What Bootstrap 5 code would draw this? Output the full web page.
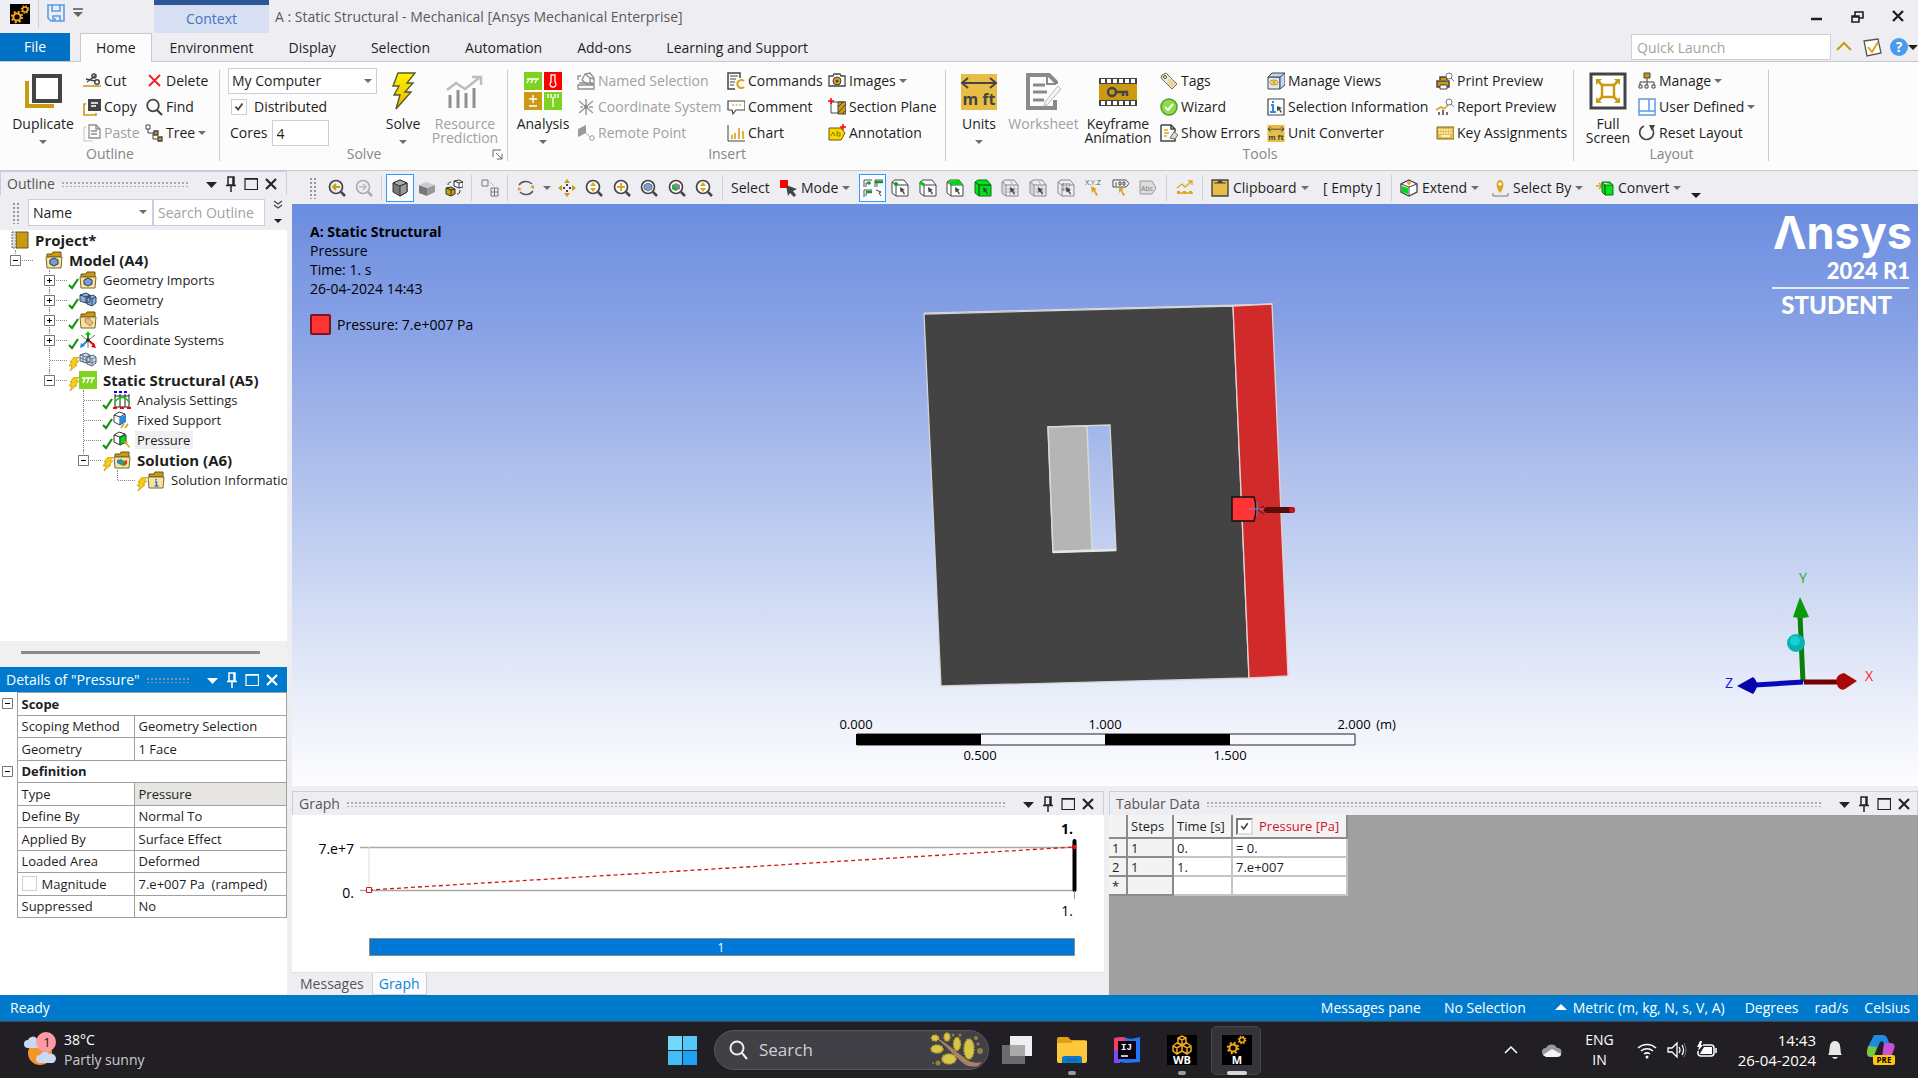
<!DOCTYPE html>
<html lang="en">
<head>
<meta charset="utf-8">
<meta name="viewport" content="width=device-width, initial-scale=1">
<title>A : Static Structural - Mechanical [Ansys Mechanical Enterprise]</title>
<link href="https://cdn.jsdelivr.net/npm/bootstrap@5.3.0/dist/css/bootstrap.min.css" rel="stylesheet">
<style>
:root{--chrome:#eeeef2;--line:#cccedb;--blue:#007acc;--gold:#c99a12;--ink:#1e1e1e}
body{font-family:"Open Sans","Noto Sans",sans-serif;font-size:14px;line-height:18px;color:var(--ink);background:var(--chrome);min-height:100vh;overflow:hidden}
svg{display:block;flex:none}
button,input,select{font:inherit;color:inherit}
.i18{width:18px;height:18px}
.plain{border:0;background:none;padding:0;border-radius:0;font-size:14px;line-height:18px;color:inherit;text-align:left;white-space:nowrap}
.plain:disabled{opacity:1;border:0;color:#a0a0a0}
.caret{width:0;height:0;border:4px solid transparent;border-top:4px solid #6d6d6d;border-bottom:0;flex:none}
.caret.ink{border-top-color:#1e1e1e;border-width:5px 5px 0}
/* title */
.titlebar{height:33px}
.quick{width:154px;padding-left:10px}
.quick-sep{width:1px;height:28px;background:var(--line)}
.context{width:115px;background:#d6e0f2;border-top:5px solid #2b5797;color:#4472c4}
.win-title{color:#5a5a5a;padding:4px 0 0 6px}
/* tabs */
.tabs{height:29px;border-bottom:1px solid #c8c8ce}
.tabs a{color:var(--ink);text-decoration:none;height:29px;display:flex;align-items:center;padding:0 17px 0 18px;white-space:nowrap}
.tabs a.file{background:#0072c6;color:#fff;width:70px;height:28px;padding:0;justify-content:center;margin-right:10px}
.tabs a.on{background:#fcfcfc;border:1px solid #c8c8ce;border-bottom:0;padding:0 15px}
.launch{width:200px;height:26px;border:1px solid var(--line);background:#fff;padding:0 5px}
.launch::placeholder,.finder::placeholder{color:#a2a2a2;opacity:1}
/* ribbon */
.ribbon{height:109px;background:#fcfcfc;border-bottom:1px solid #c8c8ce}
.group{position:relative;padding-top:6px;margin-bottom:9px}
.group::after{content:"";position:absolute;right:0;top:8px;bottom:0;width:1px;background:#ccc}
.group .caption{position:absolute;left:0;right:0;bottom:-2px;text-align:center;color:#868686}
.stack{display:flex;flex-direction:column}
.stack>*{height:26px;display:flex;align-items:center;gap:3px;white-space:nowrap}
.big{display:flex;flex-direction:column;align-items:center;text-align:center;height:78px;line-height:14px;padding-top:4px}
.big svg{width:38px;height:38px}
.big span.t{margin-top:7px}
.big .caret{margin-top:9px}
.target{width:149px;height:26px;border:1px solid var(--line);padding:0 3px;background:#fff;appearance:none}
.arrowed{position:relative}
.arrowed .caret{position:absolute;right:6px;top:11px}
.tick{appearance:none;width:16px;height:16px;border:1px solid var(--line);background:#fff;margin:0;flex:none}
.tick:checked{background:#fff url("data:image/svg+xml,%3Csvg xmlns='http://www.w3.org/2000/svg' viewBox='0 0 16 16'%3E%3Cpath d='M4 7.5 7 11l5-7' fill='none' stroke='%23444' stroke-width='2'/%3E%3C/svg%3E") center/100%}
.cores{width:57px;height:26px;border:1px solid var(--line);padding:0 4px}
/* graphics toolbar */
.gtools{height:33px;padding-left:17px}
.gtools .tb{width:28px;height:28px;display:flex;align-items:center;justify-content:center;border:1px solid transparent;flex:none;margin-right:-1px}
.gtools .tbset{display:flex;justify-content:space-between;flex:none}
.gtools .tbset .tb{margin-right:0;width:27px}
.gtools .tb.on{border-color:#3399ff;background:#fafcff}
.gtools .bar{width:1px;height:26px;background:var(--line);margin:0 4px;flex:none}
.grip{width:7px;height:22px;flex:none;background:radial-gradient(circle,#999 0 1px,transparent 1px) 0 0/4px 4px}
/* panels */
.side{width:287px;flex:none}
.panehead{height:24px;border:1px solid var(--line);border-bottom:0;color:#555;padding:0 8px 0 6px;flex:none}
.panehead .dots{height:6px;margin:0 10px 0 6px;flex:1;background:radial-gradient(circle,#9a9a9f 0 1px,transparent 1px) 0 0/4px 4px;opacity:.8}
.panehead svg{width:14px;height:16px;margin-left:6px}
.panehead.active{background:var(--blue);color:#fff;border:0;height:25px}
.finder,.filter{height:27px;border:1px solid var(--line);background:#fff;padding:0 4px;font-size:14px;border-radius:0;appearance:none}
.tree{background:#fff;height:411px;font-size:13px;overflow:hidden}
.trow{display:flex;align-items:center;height:20px;white-space:nowrap}
.trow.fw-bold{font-size:15px}
.trow .g,.trow .x{width:34px;height:20px;flex:none;position:relative}
.trow .x.v::before{content:"";position:absolute;left:15px;top:0;bottom:0;border-left:1px dotted #888}
.trow .up::before{content:"";position:absolute;left:15px;top:0;height:10px;border-left:1px dotted #888}
.trow .x::after{content:"";position:absolute;left:16px;right:1px;top:10px;border-top:1px dotted #888}
.trow .pm{position:absolute;left:10px;top:5px;width:11px;height:11px;z-index:1}
.trow .st{width:11px;height:14px;margin-top:7px}
.trow .i18{margin:0 6px 0 0}
.trow .i18.book{margin-left:11px}
.trow .sel{background:#f0f0f0;padding:0 3px 0 2px;margin-left:-2px}
.thumb{height:26px;padding:10px 27px 0 21px;background:#f0f0f0}
.thumb div{height:3px;background:#8a8a8a}
.props{width:100%;height:226px;border-collapse:collapse;font-size:13px;line-height:16px}
.props td,.props th{border:1px solid #a0a0a0;padding:0 0 0 4px;white-space:nowrap;font-weight:400}
.props th:first-child{border:0;padding:0 0 0 2px;width:17px}
.props .head td{font-weight:700}
.props .tick{width:15px;height:15px;margin-right:5px;vertical-align:-2px}
.pmbox{width:11px;height:11px}
/* scene */
.scene{position:relative;flex:1;min-height:0;background:linear-gradient(#6b8ddf,#86a0e5 20%,#a9bbeb 42%,#cdd8f3 66%,#e8edf9 84%,#fdfdff)}
.scene svg.model{position:absolute;inset:0;width:100%;height:100%}
.scene .note{position:absolute;left:18px;top:18px;font-size:14px;line-height:19px;color:#000}
.swatch{width:21px;height:21px;background:#ff3535;border:2px solid #7a1420;border-radius:2px}
.lowtab{padding:0 8px;height:22px;color:#555;text-decoration:none;display:flex;align-items:center}
.lowtab.on{background:#fbfbfd;color:#0e86d4;border:1px solid var(--line);border-top:0;padding:0 6px}
.grid{border-collapse:separate;border-spacing:0;font-size:13px;line-height:16px}
.grid td,.grid th{border-right:2px solid #c4c4c4;border-bottom:2px solid #c4c4c4;background:#fff;height:19px;padding:0 3px;font-weight:400;white-space:nowrap}
.grid th,.grid .k{background:#f3f3f3;border-right-color:#8c8c8c;border-bottom-color:#8c8c8c}
.grid thead th{height:24px;font-weight:500}
.grid .tick{width:17px;height:17px;border:2px solid #777;border-right-color:#ddd;border-bottom-color:#ddd;margin-right:6px}
.statusbar{height:26px;background:var(--blue);color:#fff;padding:0 8px 0 10px}
/* taskbar */
.taskbar{height:57px;background:#211f24;color:#fff;border-top:1px solid #46464a;display:grid;grid-template-columns:1fr auto 1fr}
.pill{width:275px;height:40px;border-radius:20px;background:#424047;border:1px solid #58565d;padding:0 4px 0 14px}
.pill input{background:none;border:0;width:100px;font-size:17px;color:#fff;outline:0}
.pill input::placeholder{color:#d0d0d4;opacity:1}
.app{width:55px;height:56px;position:relative;display:flex;align-items:center;justify-content:center}
.app.run::after{content:"";position:absolute;bottom:3px;width:8px;height:4px;border-radius:2px;background:#9b9a9e}
.app.run.cur::after{width:20px;background:#d7d7d9}
.app.cur::before{content:"";position:absolute;inset:4px 3px 3px 2px;border-radius:5px;background:#34333a;border:1px solid #47464d}
.app svg{position:relative;overflow:visible}
.tray{font-size:14px;line-height:20px}
.clock{font-size:15px}
</style>
</head>
<body class="d-flex flex-column">
<svg width="0" height="0" class="position-absolute" aria-hidden="true">
<defs>
<linearGradient id="bolt" x1="0" y1="0" x2="0" y2="1"><stop offset="0" stop-color="#fff200"/><stop offset="1" stop-color="#e8b800"/></linearGradient>
<g id="gearring" fill="none" stroke="#f5a81c"><circle r="3.6" stroke-width="2"/><circle r="5.2" stroke-width="2" stroke-dasharray="2 2.1"/></g>
<symbol id="gears" viewBox="0 0 20 20"><path fill="#000" d="M0 0h20v20H0z"/><use href="#gearring" x="7" y="13"/><use href="#gearring" transform="translate(15 5.5) scale(.7)"/></symbol>
<symbol id="save" viewBox="0 0 18 18"><path d="M1 1h16v16H4l-3-3zM5 1v6h8V1M6 17v-5h7v5M8 14v3" fill="none" stroke="#5b9be8" stroke-width="1.6"/></symbol>
<symbol id="dup" viewBox="0 0 38 38"><path d="M3 9v25h27" fill="none" stroke="#c99a12" stroke-width="4"/><path d="M10 4h26v25H10z" fill="#fff" stroke="#444" stroke-width="4"/></symbol>
<symbol id="cut" viewBox="0 0 18 18"><path d="M4 10 13 3M3 7l9 2" stroke="#444" stroke-width="1.3"/><g fill="none" stroke="#444" stroke-width="1.5"><circle cx="11" cy="4" r="2"/><circle cx="14" cy="10" r="2.3"/></g><path d="M0 14h18" stroke="#c99a12" stroke-width="1.5"/></symbol>
<symbol id="copy" viewBox="0 0 18 18"><path d="M3 6H1v11h12v-2" fill="none" stroke="#c99a12" stroke-width="1.6"/><path d="M5 1h13v12H5z" fill="#444"/><path d="M8 5h7M8 8h5" stroke="#fff" stroke-width="1.4"/></symbol>
<symbol id="paste" viewBox="0 0 18 18"><path d="M3 3H1v14h9" fill="none" stroke="#c4c4c4"/><path d="M6 1h7l4 4v9H6z M13 1v4h4M8 7h6M8 10h6" fill="none" stroke="#8e8e8e" stroke-width="1.3"/></symbol>
<symbol id="del" viewBox="0 0 18 18"><path d="m4 3 11 11M15 3 4 14" stroke="#f0202a" stroke-width="1.8"/></symbol>
<symbol id="find" viewBox="0 0 18 18"><circle cx="8" cy="7.500" r="5.800" fill="none" stroke="#444" stroke-width="1.800"/><path d="m12 12 5 5" stroke="#444" stroke-width="2.200"/></symbol>
<symbol id="treei" viewBox="0 0 18 18"><path d="M3 5v4h6M8 9v6h5" fill="none" stroke="#444"/><path d="M1 1h4v4H1z" fill="#fff" stroke="#444"/><path d="M9 7h4v4H9zM13 13h4v4h-4z" fill="#c99a12" stroke="#444" stroke-width="1.300"/></symbol>
<symbol id="solve" viewBox="0 0 38 38"><path d="M14 1h17l-8 10h6l-8 9h6L12 37l4-14h-6l5-9H9z" fill="url(#bolt)" stroke="#575a2a" stroke-width="1.400"/></symbol>
<symbol id="predict" viewBox="0 0 38 38"><path d="M4 36V23M12 36V18M20 36V21M28 36V16" stroke="#8f8f8f" stroke-width="3"/><path d="m1 18 9-7 9 6L33 6M26 5h9v8" fill="none" stroke="#bdbdbd" stroke-width="2.500"/></symbol>
<symbol id="analysis" viewBox="0 0 38 38"><path fill="#7ed321" d="M0 0h18v18H0zM20 20h18v18H20z"/><path fill="#f00" d="M20 0h18v18H20z"/><path fill="#c99a12" d="M0 20h18v18H0z"/><path d="M3 7h12M5 7l-2 4M9 7l-2 4M13 7l-2 4M9 23v8M5 27h8M5 34h8M24 22v4M27 22v4M29 25v10M31 22v4M34 22v4" stroke="#fff" stroke-width="1.400" fill="none"/><path d="M27 3h4v7a3 3 0 1 1-4 0z" fill="none" stroke="#fff" stroke-width="1.300"/></symbol>
<symbol id="named" viewBox="0 0 18 18"><path d="M5 8 8 2l5-1 4 5v6l-6 1zM8 2l5 4 4 1M13 6v5M1 8V4h3M2 11h14M1 13h16v4H1z" fill="none" stroke="#8e8e8e" stroke-width="1.300"/></symbol>
<symbol id="coord" viewBox="0 0 18 18"><path d="M9 9V1M9 9l7 6M9 9l-7 6M2 3l6 5M16 3l-6 5M3 9h3M12 9h4M9 11v6" stroke="#999" stroke-width="1.500"/><circle cx="9" cy="9" r="2" fill="#888"/></symbol>
<symbol id="remote" viewBox="0 0 18 18"><path d="M1 5 9 1v8l-8 4z" fill="#9a9a9a"/><path d="m9 9 4 4" stroke="#aaa"/><circle cx="15" cy="14" r="2.300" fill="none" stroke="#999"/></symbol>
<symbol id="cmds" viewBox="0 0 18 18"><path d="M13 6V1H1v16h7" fill="none" stroke="#444" stroke-width="1.500"/><path d="M3 4h8M3 7h6M3 10h5M3 13h4" stroke="#444"/><path d="M17 9a4 4 0 1 0 0 6" fill="none" stroke="#dba520" stroke-width="2.200"/></symbol>
<symbol id="comment" viewBox="0 0 18 18"><path d="M1 3h17v9H9l-3 4-1-4H1z" fill="#fff" stroke="#444" stroke-width="1.200"/><path d="M5 7h9" stroke="#c99a12" stroke-dasharray="2 1.500"/></symbol>
<symbol id="chart" viewBox="0 0 18 18"><path d="M1 1v16h17" fill="none" stroke="#444"/><path d="M5 15v-4M8 15V9M12 15V4M16 15V7" stroke="#dba520" stroke-width="1.700"/></symbol>
<symbol id="camera" viewBox="0 0 18 18"><path d="M1 4h4l1-2h6l1 2h4v10H1z" fill="#fff" stroke="#444" stroke-width="1.300"/><circle cx="9" cy="9" r="4" fill="#dba520" stroke="#444"/><circle cx="9" cy="9" r="1.500" fill="#444"/></symbol>
<symbol id="section" viewBox="0 0 18 18"><path d="M3 4h14v11H3z" fill="#fff" stroke="#444"/><path d="M10 4h8v12h-8z" fill="#c99a12" stroke="#444"/><path d="m10 9 5-5M10 15 18 6M14 16l4-4" stroke="#444"/><path d="M3 0v6M0 3h6" stroke="#f00" stroke-width="1.500"/></symbol>
<symbol id="annot" viewBox="0 0 18 18"><path d="M1 4h12l4 5-4 7H1z" fill="#f8d800" stroke="#6b5a00"/><path d="m3 12 2-4 2 4M9 7v5h3V9H9" fill="none" stroke="#8a7400"/><path d="M15 0v6M12 3h6" stroke="#f00" stroke-width="1.500"/></symbol>
<symbol id="units" viewBox="0 0 38 38"><path d="M1 2h36v36H1z" fill="#e8bd45"/><path d="M2 11h34M8 6l-6 5 6 5M30 6l6 5-6 5" fill="none" stroke="#444" stroke-width="2"/><text x="19" y="33" text-anchor="middle" font-size="16" font-weight="700" fill="#444">m ft</text></symbol>
<symbol id="sheet" viewBox="0 0 38 38"><path d="M31 12v-2l-7-7H3v33h27v-8" fill="none" stroke="#8a8a8a" stroke-width="4"/><path d="M22 3v9h9" fill="none" stroke="#8a8a8a" stroke-width="2"/><path d="M8 13h12M8 20h14M8 28h11" stroke="#8a8a8a" stroke-width="3"/><path d="m33 14 3 3-14 16-3 1 1-4z" fill="#f4f4f4" stroke="#bbb"/></symbol>
<symbol id="keyf" viewBox="0 0 38 38"><path d="M0 6h38v28H0z" fill="#444"/><path d="M0 12h38v16H0z" fill="#c99a12"/><path d="M2 9h36M2 31h36" stroke="#fff" stroke-width="4" stroke-dasharray="4 2"/><circle cx="13" cy="20" r="4" fill="none" stroke="#444" stroke-width="2.500"/><path d="M17 20h12M24 20v4M28 20v4" stroke="#444" stroke-width="2.500"/></symbol>
<symbol id="tag" viewBox="0 0 18 18"><path d="m2 3 4-2 11 11-5 5L1 6z" fill="#f6ecd2" stroke="#666"/><path d="m8 7 4 0 4 5-4 4-5-5z" fill="#ecd49a"/><circle cx="5" cy="5" r="1.500" fill="#fff" stroke="#444"/></symbol>
<symbol id="wiz" viewBox="0 0 18 18"><circle cx="9" cy="9" r="8" fill="#8edb4a" stroke="#5a9a36" stroke-width="1.500"/><path d="m5 9 3 3 5-6" fill="none" stroke="#fff" stroke-width="2"/></symbol>
<symbol id="errs" viewBox="0 0 18 18"><path d="M1 1h10l4 4v3M15 13v4H1V1M11 1v4h4" fill="none" stroke="#444" stroke-width="1.500"/><path d="M4 6h4M4 9h5M4 12h3" stroke="#dba520" stroke-width="1.500"/><path d="m10 14 4-6 4 3-3 4z" fill="#ddd" stroke="#666"/></symbol>
<symbol id="views" viewBox="0 0 18 18"><path d="M1 5h12v12H1z" fill="#dce8f8" stroke="#444"/><path d="m1 5 4-4h13l-5 4zM18 1v12l-5 4V5" fill="#c2d6f2" stroke="#444"/><ellipse cx="7" cy="10.500" rx="4" ry="2.500" fill="#f2d888" stroke="#c99a12"/><circle cx="7" cy="10.500" r="1" fill="#a87800"/></symbol>
<symbol id="selinfo" viewBox="0 0 18 18"><path d="M1 1h16v16H1z" fill="#fff" stroke="#444" stroke-width="1.200"/><path d="M6 3v2M4 7h2v7M3 14h6" stroke="#2f86e8" stroke-width="2" fill="none"/><path d="m10 8 5 2-2 1 2 3-1 1-2-3-2 1z" fill="#444"/></symbol>
<symbol id="print" viewBox="0 0 18 18"><path d="M4 8V5h7v3M1 9h12v6H1z" fill="#c99a12" stroke="#444" stroke-width="1.500"/><path d="M4 13h7v4H4z" fill="#fff" stroke="#444"/><circle cx="13" cy="4" r="3" fill="#fff" stroke="#777"/><path d="m15 6 3 3" stroke="#777"/></symbol>
<symbol id="report" viewBox="0 0 18 18"><path d="M3 17v-3M7 17v-5M11 17v-3" stroke="#444" stroke-width="1.500"/><path d="m0 12 5-3 3 2 4-4" fill="none" stroke="#dba520" stroke-width="1.600"/><circle cx="13" cy="4" r="3" fill="#fff" stroke="#777"/><path d="m15 6 3 3" stroke="#777"/></symbol>
<symbol id="keys" viewBox="0 0 18 18"><path d="M1 3h17v12H1z" fill="#e8bd45" stroke="#7d6620"/><path d="M3 6h13M3 9h13" stroke="#fff" stroke-width="1.500" stroke-dasharray="1.500 1"/><path d="M5 12h9" stroke="#fff" stroke-width="1.500"/></symbol>
<symbol id="full" viewBox="0 0 38 38"><path d="M2 2h34v34H2z" fill="#fff" stroke="#444" stroke-width="3"/><path d="M13 13h12v12H13zM13 13 8 8M25 13l5-5M13 25l-5 5M25 25l5 5" fill="none" stroke="#c99a12" stroke-width="2.500"/><path d="M7 7h6l-6 6zM31 7h-6l6 6zM7 31h6l-6-6zM31 31h-6l6-6z" fill="#c99a12"/></symbol>
<symbol id="manage" viewBox="0 0 18 18"><path d="M9 6v4M2 13v-3h14v3M9 10v3" fill="none" stroke="#444"/><path d="M6 1h6v5H6z" fill="#c99a12" stroke="#444"/><path d="M1 13h3v3H1zM7 13h3v3H7zM14 13h3v3h-3z" fill="#fff" stroke="#444"/></symbol>
<symbol id="userdef" viewBox="0 0 18 18"><path d="M1 1h16v16H1zM1 13h16M11 1v12" fill="#fff" stroke="#5b9be8" stroke-width="1.500"/></symbol>
<symbol id="reset" viewBox="0 0 18 18"><path d="M6 2a7 7 0 1 0 8 2" fill="none" stroke="#444" stroke-width="1.700"/><path d="M11 1h6l-3 6z" fill="#444"/></symbol>
<symbol id="zback" viewBox="0 0 18 18"><circle cx="8" cy="8" r="6.500" fill="none" stroke="#444" stroke-width="1.700"/><path d="m13 13 4 4" stroke="#444" stroke-width="2.500"/><path d="M12 8H5m3-3L5 8l3 3" fill="none" stroke="#c99a12" stroke-width="1.800"/></symbol>
<symbol id="zfwd" viewBox="0 0 18 18"><circle cx="8" cy="8" r="6.500" fill="none" stroke="#aaa" stroke-width="1.500"/><path d="m13 13 4 4" stroke="#aaa" stroke-width="2.500"/><path d="M4 8h7M8 5l3 3-3 3" fill="none" stroke="#bbb" stroke-width="1.500"/></symbol>
<symbol id="zud" viewBox="0 0 18 18"><circle cx="8" cy="8" r="6.500" fill="#fff" stroke="#444" stroke-width="1.700"/><path d="m13 13 4 4" stroke="#444" stroke-width="2.500"/><path d="m8 3 3 4H5zM8 13l3-4H5z" fill="#dba520"/></symbol>
<symbol id="zplus" viewBox="0 0 18 18"><circle cx="8" cy="8" r="6.500" fill="#fff" stroke="#444" stroke-width="1.700"/><path d="m13 13 4 4" stroke="#444" stroke-width="2.500"/><path d="M8 4v8M4 8h8" stroke="#dba520" stroke-width="2"/></symbol>
<symbol id="zblue" viewBox="0 0 18 18"><circle cx="8" cy="8" r="6.500" fill="#fff" stroke="#444" stroke-width="1.700"/><path d="m13 13 4 4" stroke="#444" stroke-width="2.500"/><path d="m8 4 4 2v4l-4 2-4-2V6z" fill="#7d9fcc" stroke="#456" stroke-width=".7"/></symbol>
<symbol id="zgreen" viewBox="0 0 18 18"><circle cx="8" cy="8" r="6.500" fill="#fff" stroke="#444" stroke-width="1.700"/><path d="m13 13 4 4" stroke="#444" stroke-width="2.500"/><path d="m8 4 4 2v4l-4 2-4-2V6z" fill="#888"/><path d="m4 6 4 2v4l-4-2z" fill="#0cc22a"/></symbol>
<symbol id="cubeiso" viewBox="0 0 18 18"><path d="m9 1 7 3v9l-7 4-7-4V4z" fill="#777" stroke="#333"/><path d="m2 4 7 3 7-3-7-3z" fill="#aaa" stroke="#333"/><path d="m9 7 7-3v9l-7 4z" fill="#999" stroke="#333"/></symbol>
<symbol id="cubeflat" viewBox="0 0 18 18"><path d="m1 6 8 3v8l-8-3z" fill="#777"/><path d="m9 9 8-3v7l-8 4z" fill="#999"/><path d="m1 6 7-3 9 3-8 3z" fill="#ccc"/></symbol>
<symbol id="cubes" viewBox="0 0 18 18"><path d="m9 2 5-1 4 2v5l-4 1-5-2zM9 2l5 2 4-1M14 4v5" fill="#fff" stroke="#333"/><path d="m1 9 5-1 4 2v5l-4 2-5-2z" fill="#c99a12" stroke="#333"/><path d="m1 9 5 2 4-1M6 11v5M3 6c0-2 1-3 3-3M15 11c0 3-1 4-3 4" fill="none" stroke="#333"/></symbol>
<symbol id="boxes" viewBox="0 0 18 18"><path d="M1 1h6v6H1zM10 9h7v8h-7zM10 13h7M13.500 9v8" fill="none" stroke="#777"/><path d="m9 3 4 4" stroke="#bbb"/></symbol>
<symbol id="rot" viewBox="0 0 18 18"><path d="M2 6a8 7 0 0 1 13-1M16 12a8 7 0 0 1-13 1" fill="none" stroke="#555" stroke-width="1.500"/><path d="M17 6v4l-4-2zM1 12V8l4 2z" fill="#dba520"/></symbol>
<symbol id="pan" viewBox="0 0 18 18"><path d="m9 0 3 4H6zM9 18l3-4H6zM0 9l4-3v6zM18 9l-4-3v6z" fill="#c99a12"/><path d="M9 5v2M9 11v2M5 9h2M11 9h2" stroke="#444" stroke-width="2"/></symbol>
<symbol id="modei" viewBox="0 0 18 18"><path d="M1 1h8v8H1z" fill="#f00"/><path d="m7 6 11 4-4 2 3 4-2 2-4-4-2 3z" fill="#444"/></symbol>
<symbol id="smart" viewBox="0 0 20 18"><path d="M1 8V1h8M12 8V1h8M1 18v-7h8M3 8V4h3M14 8V4M3 17v-3" fill="none" stroke="#555"/><circle cx="6" cy="4" r="1.800" fill="#0b9b28"/><path d="M12 3h8M3 13h6" stroke="#0b9b28" stroke-width="2.500"/><path d="m13 11 5 2-2 1 2 3" fill="none" stroke="#444"/></symbol>
<symbol id="cursor" viewBox="0 0 18 18"><path d="m9 8 5 3-2 .500 2 3-1 1-2-3-1.500 1z" fill="#444"/></symbol>
<symbol id="sv" viewBox="0 0 18 18"><path d="M5 6h12v11H5zM5 6 1 3v11l4 3M1 3l3-2h9l4 5" fill="#fff" stroke="#444"/><circle cx="5" cy="5" r="2" fill="#0c9b28"/><use href="#cursor"/></symbol>
<symbol id="se" viewBox="0 0 18 18"><path d="M5 6h12v11H5zM5 6 1 3v11l4 3M1 3l3-2h9l4 5" fill="#fff" stroke="#444"/><path d="m1 3 4 3" stroke="#0c0" stroke-width="3"/><use href="#cursor"/></symbol>
<symbol id="sf" viewBox="0 0 18 18"><path d="M5 6h12v11H5zM5 6 1 3v11l4 3M1 3l3-2h9l4 5" fill="#fff" stroke="#444"/><path d="m1 2 12-1 4 5H5z" fill="#00d818"/><use href="#cursor"/></symbol>
<symbol id="sb" viewBox="0 0 18 18"><path d="M5 6h12v11H5zM5 6 1 3v11l4 3zM1 3l3-2h9l4 5H5z" fill="#00e41a" stroke="#126b1c"/><use href="#cursor"/></symbol>
<symbol id="sm" viewBox="0 0 18 18"><path d="M5 6h12v11H5zM5 6 1 3v11l4 3M1 3l3-2h9l4 5" fill="none" stroke="#888"/><path d="M9 6v11M13 6v11M5 10h12M5 13h12M3 2v13M9 1l3 5" fill="none" stroke="#b4b4b4"/><use href="#cursor"/></symbol>
<symbol id="smm" viewBox="0 0 18 18"><path d="M5 6h12v11H5zM5 6 1 3v11l4 3M1 3l3-2h9l4 5" fill="none" stroke="#888"/><path d="M5 4h8v8H5z" fill="#999"/><path d="M8 4v8M11 4v8M5 8h8" stroke="#eee"/><use href="#cursor"/></symbol>
<symbol id="xyz" viewBox="0 0 18 18"><text x="9" y="6" text-anchor="middle" font-size="7" fill="#555">X.Y.Z</text><path d="m7 7 6 3-2 1 3 5-2 1-2-5-2 2z" fill="#dba520"/></symbol>
<symbol id="lbl" viewBox="0 0 18 18"><path d="M1 1h13l3 3.500L14 8H1z" fill="#fff" stroke="#444"/><path d="M4 3v4M7 3h2v3H7zM11 3h2v3h-2z" stroke="#444" fill="none"/><path d="m7 8 5 2-2 1 3 5-2 1-2-5-2 2z" fill="#dba520"/></symbol>
<symbol id="abct" viewBox="0 0 18 18"><path d="M1 2h12l4 7-4 6H1z" fill="#ddd" stroke="#999"/><text x="8" y="12" text-anchor="middle" font-size="7" fill="#777">Abc</text></symbol>
<symbol id="trend" viewBox="0 0 18 18"><path d="m1 9 5-4 3 3 7-6M12 2h4v4M1 14h16" fill="none" stroke="#dba520" stroke-width="1.300"/><path d="M1 12h3v3H1zM7 12h3v3H7zM13 12h3v3h-3z" fill="#dba520"/></symbol>
<symbol id="clip" viewBox="0 0 18 18"><path d="M1 1h16v16H1z" fill="#e8bd45" stroke="#444" stroke-width="1.400"/><path d="M3 4h12M6 4l3-3 3 3" stroke="#444" fill="#444"/></symbol>
<symbol id="ext" viewBox="0 0 18 18"><path d="m9 1 8 4v8l-8 4-8-4V5z" fill="#fff" stroke="#444" stroke-width="1.300"/><path d="m2 7 6 2v6l-6-2z" fill="#00d81a"/><path d="M9 8v9M9 8l8-3M9 8 1 5" stroke="#444"/><path d="M9 2v4M7 4h4" stroke="#dba520" stroke-width="1.500"/></symbol>
<symbol id="pinpt" viewBox="0 0 18 18"><path d="M9 14C4 8 5 1 9 1s5 7 0 13z" fill="#dba520"/><circle cx="9" cy="5" r="1.700" fill="#fff"/><path d="M2 14v3h15v-3" fill="none" stroke="#777"/></symbol>
<symbol id="conv" viewBox="0 0 18 18"><path d="M0 7h5M3 4l3 3-3 3" stroke="#dba520" fill="none" stroke-width="1.500"/><path d="M9 6h8v10H9zM9 6 6 3v10l3 3zM6 3h8l3 3" fill="#00e41a" stroke="#126b1c"/></symbol>
<symbol id="pmm" viewBox="0 0 11 11"><path d="M.5.500h10v10H.5z" fill="#fff" stroke="#777"/><path d="M3 5.500h5" stroke="#000"/></symbol>
<symbol id="pmp" viewBox="0 0 11 11"><path d="M.5.500h10v10H.5z" fill="#fff" stroke="#777"/><path d="M3 5.500h5M5.500 3v5" stroke="#000"/></symbol>
<symbol id="ok" viewBox="0 0 11 14"><path d="m1 8 3 3 6-9" fill="none" stroke="#10930f" stroke-width="2.200"/></symbol>
<symbol id="zap" viewBox="0 0 11 14"><path d="M6 0h5L8 4h3L7 8h2l-7 6 2-5H1l3-4H2z" fill="#f8cc10" stroke="#b98c00" stroke-width=".6"/></symbol>
<symbol id="book" viewBox="0 0 18 18"><path d="M5 1h12v16H5z" fill="#c99a12" stroke="#6b5512"/><path d="M1 1h4v16H1z" fill="#ddd" stroke="#666" stroke-dasharray="2 1"/></symbol>
<symbol id="folder" viewBox="0 0 18 18"><path d="M2 3h5l1-2h8v5H2z" fill="#c99a12" stroke="#6b5512"/><path d="M1 6h16l-1 11H2z" fill="#f6e3a0" stroke="#7a6a30"/></symbol>
<symbol id="fcube" viewBox="0 0 18 18"><use href="#folder"/><path d="m9 7 4 2v4l-4 2-4-2V9z" fill="#6f9fd8" stroke="#334"/></symbol>
<symbol id="fmat" viewBox="0 0 18 18"><use href="#folder"/><path d="m6 8 4-1 4 5-3 3-5-4z" fill="#efb888" stroke="#a86"/></symbol>
<symbol id="fsol" viewBox="0 0 18 18"><use href="#folder"/><path d="m4 9 4-1v6l-4-2z" fill="#2f80e0"/><path d="m8 8 3 2v5l-3-1z" fill="#1db832"/><path d="m11 10 3-1v4l-3 2z" fill="#e23a2a"/></symbol>
<symbol id="finfo" viewBox="0 0 18 18"><use href="#folder"/><path d="M9 8v1.500M8 11h1.500v4M7.500 15h4" stroke="#2f70d0" stroke-width="1.500" fill="none"/></symbol>
<symbol id="geo" viewBox="0 0 18 18"><path d="m1 4 6-2 4 2v7l-4 1-6-2zM8 6l6-2 3 2v6l-4 3-5-2z" fill="#86aee0" stroke="#345"/><path d="m1 4 6 2 4-2M7 6v6M8 6l5 2 4-2M13 8v6" stroke="#345" fill="none"/></symbol>
<symbol id="mesh" viewBox="0 0 18 18"><path d="m1 4 6-2 4 2v7l-4 1-6-2zM8 6l6-2 3 2v6l-4 3-5-2z" fill="#cbdaf0" stroke="#567"/><path d="m1 4 6 2 4-2M7 6v6M8 6l5 2 4-2M13 8v6M1 7l6 2M4 3v8M8 10l5 2 4-2" stroke="#567" fill="none" stroke-width=".8"/></symbol>
<symbol id="csys" viewBox="0 0 18 18"><path d="M9 9V3" stroke="#0a0" stroke-width="2"/><path d="m9 0 3 4H6z" fill="#0c0"/><path d="m9 9 6 5" stroke="#e00" stroke-width="2"/><path d="m17 17-5-1 3-4z" fill="#e00"/><path d="m9 9-5 5" stroke="#28d" stroke-width="2"/><path d="m1 17 1-5 4 3z" fill="#28d"/><path d="m2 4 5 4M16 4l-5 4M9 11v6" stroke="#777"/><circle cx="9" cy="9" r="2" fill="#333"/></symbol>
<symbol id="stat" viewBox="0 0 18 18"><path d="M0 0h18v18H0z" fill="#7ed321"/><path d="M3 7h13M6 7l-2 5M10 7l-2 5M14 7l-2 5" stroke="#fff" stroke-width="1.500"/></symbol>
<symbol id="aset" viewBox="0 0 18 18"><path d="M2 3v13M7 3v13M12 3v13M16 3v13M2 5h14M2 16h14" stroke="#222"/><path d="M2 11c4-6 10-6 14 0" fill="none" stroke="#0c0" stroke-width="1.600"/><path d="M1 1h3M6 1h3M11 1h3" stroke="#00f" stroke-width="2"/><path d="M0 17h4M7 17h4M14 17h4" stroke="#f00" stroke-width="2"/></symbol>
<symbol id="fix" viewBox="0 0 18 18"><path d="m1 4 5-3 6 2v8l-5 3-6-3zM1 4l6 2 5-3M7 6v8" fill="#fff" stroke="#345"/><path d="m7 6 6-2v7l-6 3z" fill="#2f86e0"/><path d="m8 17 3-4M12 17l3-4" stroke="#c99a12" stroke-width="1.500"/></symbol>
<symbol id="pres" viewBox="0 0 18 18"><path d="m1 4 5-3 6 2v8l-5 3-6-3zM1 4l6 2 5-3M7 6v8" fill="#fff" stroke="#333"/><path d="m7 6 6-2v7l-6 3z" fill="#0ed42a" stroke="#252"/><path d="m11 10 4 1-1 1 3 4-1 1-3-4-1 1z" fill="#dba520"/></symbol>
<symbol id="pin" viewBox="0 0 14 16"><path d="M4 1h6v8H4zM2 9.500h10M7 10v6M9 1v8" fill="none" stroke="currentColor" stroke-width="1.500"/></symbol>
<symbol id="maxi" viewBox="0 0 14 16"><path d="M1 2.500h12.500v11H1z" fill="none" stroke="currentColor" stroke-width="1.200"/><path d="M1 3h12.500" stroke="currentColor" stroke-width="1.500"/></symbol>
<symbol id="cls" viewBox="0 0 14 16"><path d="m2 3 10 10M12 3 2 13" stroke="currentColor" stroke-width="2.200"/></symbol>
<symbol id="cdn" viewBox="0 0 14 16"><path d="M2 6h11l-5.500 6z" fill="currentColor"/></symbol>
</defs>
</svg>

<header>
 <div class="titlebar d-flex align-items-start">
  <div class="quick d-flex align-items-start">
   <svg width="20" height="20" class="mt-1"><use href="#gears"/></svg>
   <div class="quick-sep ms-2 me-2"></div>
   <button class="btn plain mt-1" aria-label="Save"><svg class="i18"><use href="#save"/></svg></button>
   <button class="btn plain d-flex flex-column align-items-center gap-1 ms-2 pt-2" aria-label="Customize toolbar"><svg width="10" height="9"><path d="M0 1h10" stroke="#555" stroke-width="1.500"/><path d="M0 4h10L5 9z" fill="#666"/></svg></button>
  </div>
  <div class="context h-100 d-flex align-items-center justify-content-center">Context</div>
  <div class="win-title flex-grow-1">
   <div class="pt-1">A : Static Structural - Mechanical [Ansys Mechanical Enterprise]</div></div>
  <div class="d-flex align-items-center gap-4 pt-2" style="padding-right:13px">
   <button class="btn plain" aria-label="Minimize"><svg width="18" height="18"><path d="M4 11h11" stroke="#1e1e1e" stroke-width="2.500"/></svg></button>
   <button class="btn plain" aria-label="Restore"><svg width="18" height="18"><path d="M3 8h7v6H3zM3 9h7M6 8V4h8v6h-4" fill="none" stroke="#1e1e1e" stroke-width="1.600"/></svg></button>
   <button class="btn plain" aria-label="Close"><svg width="14" height="18"><path d="m2 3 10 10M12 3 2 13" stroke="#1e1e1e" stroke-width="2.300"/></svg></button>
  </div>
 </div>
 <nav class="tabs d-flex">
  <a class="file" href="#">File</a><a class="on" href="#">Home</a><a href="#">Environment</a><a href="#">Display</a><a href="#">Selection</a><a href="#">Automation</a><a href="#">Add-ons</a><a href="#">Learning and Support</a>
  <div class="ms-auto d-flex align-items-center" style="gap:3px">
   <input class="launch" placeholder="Quick Launch" aria-label="Quick Launch">
   <svg width="20" height="18"><path d="m3 12 7-7 7 7" fill="none" stroke="#c99a12" stroke-width="2"/></svg>
   <svg width="30" height="22"><path d="m7 5 14-2 3 14-14 3z" fill="#fff" stroke="#555" stroke-width="1.300"/><path d="m11 11 4 5 6-10" fill="none" stroke="#dba520" stroke-width="2"/></svg>
   <svg width="19" height="19"><circle cx="9" cy="9" r="9" fill="#4a9af0"/><text x="9" y="14" text-anchor="middle" font-size="14" font-weight="700" fill="#fff">?</text></svg><span class="caret ink" style="margin-left:-4px"></span>
  </div>
 </nav>
 <div class="ribbon d-flex">
  <section class="group d-flex" style="width:220px;padding-left:8px">
   <button class="btn plain big" style="width:70px"><svg><use href="#dup"/></svg><span class="t">Duplicate</span><span class="caret"></span></button>
   <div class="stack" style="width:67px;padding-left:5px">
    <button class="btn plain"><svg class="i18"><use href="#cut"/></svg>Cut</button>
    <button class="btn plain"><svg class="i18"><use href="#copy"/></svg>Copy</button>
    <button class="btn plain" disabled><svg class="i18"><use href="#paste"/></svg>Paste</button>
   </div>
   <div class="stack">
    <button class="btn plain"><svg class="i18"><use href="#del"/></svg>Delete</button>
    <button class="btn plain"><svg class="i18"><use href="#find"/></svg>Find</button>
    <button class="btn plain"><svg class="i18"><use href="#treei"/></svg>Tree <span class="caret"></span></button>
   </div>
   <div class="caption">Outline</div>
  </section>
  <section class="group d-flex" style="width:288px;padding-left:8px">
   <div class="stack" style="width:150px">
    <div class="arrowed"><select class="target" aria-label="Solve target"><option>My Computer</option></select><span class="caret"></span></div>
    <label style="padding-left:3px;gap:7px"><input class="tick" type="checkbox" checked>Distributed</label>
    <label style="padding-left:2px;gap:4px">Cores <input class="cores" value="4"></label>
   </div>
   <button class="btn plain big" style="width:50px"><svg><use href="#solve"/></svg><span class="t">Solve</span><span class="caret"></span></button>
   <button class="btn plain big" style="width:74px" disabled><svg><use href="#predict"/></svg><span class="t">Resource<br>Prediction</span></button>
   <div class="caption">Solve</div>
   <svg width="12" height="12" class="position-absolute" style="right:4px;bottom:0"><path d="M1 8V1h8M4 4l6 6M10 5v5H5" fill="none" stroke="#666"/></svg>
  </section>
  <section class="group d-flex" style="width:438px;padding-left:5px">
   <button class="btn plain big" style="width:60px"><svg><use href="#analysis"/></svg><span class="t">Analysis</span><span class="caret"></span></button>
   <div class="stack" style="width:154px;padding-left:4px">
    <button class="btn plain" disabled><svg class="i18"><use href="#named"/></svg>Named Selection</button>
    <button class="btn plain" disabled><svg class="i18"><use href="#coord"/></svg>Coordinate System</button>
    <button class="btn plain" disabled><svg class="i18"><use href="#remote"/></svg>Remote Point</button>
   </div>
   <div class="stack" style="width:101px">
    <button class="btn plain"><svg class="i18"><use href="#cmds"/></svg>Commands</button>
    <button class="btn plain"><svg class="i18"><use href="#comment"/></svg>Comment</button>
    <button class="btn plain"><svg class="i18"><use href="#chart"/></svg>Chart</button>
   </div>
   <div class="stack">
    <button class="btn plain"><svg class="i18"><use href="#camera"/></svg>Images<span class="caret"></span></button>
    <button class="btn plain"><svg class="i18"><use href="#section"/></svg>Section Plane</button>
    <button class="btn plain"><svg class="i18"><use href="#annot"/></svg>Annotation</button>
   </div>
   <div class="caption">Insert</div>
  </section>
  <section class="group d-flex" style="width:628px;padding-left:5px">
   <button class="btn plain big" style="width:56px"><svg><use href="#units"/></svg><span class="t">Units</span><span class="caret"></span></button>
   <button class="btn plain big" style="width:73px" disabled><svg><use href="#sheet"/></svg><span class="t">Worksheet</span></button>
   <button class="btn plain big" style="width:76px"><svg><use href="#keyf"/></svg><span class="t">Keyframe<br>Animation</span></button>
   <div class="stack" style="width:111px;padding-left:4px">
    <button class="btn plain"><svg class="i18"><use href="#tag"/></svg>Tags</button>
    <button class="btn plain"><svg class="i18"><use href="#wiz"/></svg>Wizard</button>
    <button class="btn plain"><svg class="i18"><use href="#errs"/></svg>Show Errors</button>
   </div>
   <div class="stack" style="width:169px">
    <button class="btn plain"><svg class="i18"><use href="#views"/></svg>Manage Views</button>
    <button class="btn plain"><svg class="i18"><use href="#selinfo"/></svg>Selection Information</button>
    <button class="btn plain"><svg class="i18"><use href="#units"/></svg>Unit Converter</button>
   </div>
   <div class="stack">
    <button class="btn plain"><svg class="i18"><use href="#print"/></svg>Print Preview</button>
    <button class="btn plain"><svg class="i18"><use href="#report"/></svg>Report Preview</button>
    <button class="btn plain"><svg class="i18"><use href="#keys"/></svg>Key Assignments</button>
   </div>
   <div class="caption">Tools</div>
  </section>
  <section class="group d-flex" style="width:195px;padding-left:8px">
   <button class="btn plain big" style="width:52px"><svg><use href="#full"/></svg><span class="t">Full<br>Screen</span></button>
   <div class="stack" style="padding-left:4px">
    <button class="btn plain"><svg class="i18"><use href="#manage"/></svg>Manage<span class="caret"></span></button>
    <button class="btn plain"><svg class="i18"><use href="#userdef"/></svg>User Defined<span class="caret"></span></button>
    <button class="btn plain"><svg class="i18"><use href="#reset"/></svg>Reset Layout</button>
   </div>
   <div class="caption">Layout</div>
  </section>
 </div>
</header>

<main class="d-flex flex-grow-1" style="gap:5px;min-height:0">
 <aside class="side d-flex flex-column">
  <div class="panehead d-flex align-items-center">Outline<span class="dots"></span><svg class="text-dark"><use href="#cdn"/></svg><svg class="text-dark"><use href="#pin"/></svg><svg class="text-dark"><use href="#maxi"/></svg><svg class="text-dark"><use href="#cls"/></svg></div>
  <div class="d-flex align-items-center" style="height:35px;padding:0 3px 0 12px">
   <span class="grip" style="margin-right:9px"></span>
   <div class="arrowed d-flex"><select class="filter" style="width:125px" aria-label="Filter by"><option>Name</option></select><span class="caret"></span></div>
   <input class="finder" style="width:112px" placeholder="Search Outline" aria-label="Search Outline">
   <svg width="18" height="28" class="ms-1"><path d="m5 2 4 3 4-3M5 6l4 3 4-3" fill="none" stroke="#444" stroke-width="1.300"/><path d="M5 20h8l-4 4z" fill="#1e1e1e"/></svg>
  </div>
  <div class="tree">
   <div class="trow fw-bold"><svg class="i18 book"><use href="#book"/></svg>Project*</div>
   <div class="trow fw-bold"><span class="x up"><svg class="pm"><use href="#pmm"/></svg></span><span class="st"></span><svg class="i18"><use href="#fcube"/></svg>Model (A4)</div>
   <div class="trow"><span class="g"></span><span class="x v"><svg class="pm"><use href="#pmp"/></svg></span><svg class="st"><use href="#ok"/></svg><svg class="i18"><use href="#fcube"/></svg>Geometry Imports</div>
   <div class="trow"><span class="g"></span><span class="x v"><svg class="pm"><use href="#pmp"/></svg></span><svg class="st"><use href="#ok"/></svg><svg class="i18"><use href="#geo"/></svg>Geometry</div>
   <div class="trow"><span class="g"></span><span class="x v"><svg class="pm"><use href="#pmp"/></svg></span><svg class="st"><use href="#ok"/></svg><svg class="i18"><use href="#fmat"/></svg>Materials</div>
   <div class="trow"><span class="g"></span><span class="x v"><svg class="pm"><use href="#pmp"/></svg></span><svg class="st"><use href="#ok"/></svg><svg class="i18"><use href="#csys"/></svg>Coordinate Systems</div>
   <div class="trow"><span class="g"></span><span class="x v"></span><svg class="st"><use href="#zap"/></svg><svg class="i18"><use href="#mesh"/></svg>Mesh</div>
   <div class="trow fw-bold"><span class="g"></span><span class="x up"><svg class="pm"><use href="#pmm"/></svg></span><svg class="st"><use href="#zap"/></svg><svg class="i18"><use href="#stat"/></svg>Static Structural (A5)</div>
   <div class="trow"><span class="g"></span><span class="g"></span><span class="x v"></span><svg class="st"><use href="#ok"/></svg><svg class="i18"><use href="#aset"/></svg>Analysis Settings</div>
   <div class="trow"><span class="g"></span><span class="g"></span><span class="x v"></span><svg class="st"><use href="#ok"/></svg><svg class="i18"><use href="#fix"/></svg>Fixed Support</div>
   <div class="trow"><span class="g"></span><span class="g"></span><span class="x v"></span><svg class="st"><use href="#ok"/></svg><svg class="i18"><use href="#pres"/></svg><span class="sel">Pressure</span></div>
   <div class="trow fw-bold"><span class="g"></span><span class="g"></span><span class="x up"><svg class="pm"><use href="#pmm"/></svg></span><svg class="st"><use href="#zap"/></svg><svg class="i18"><use href="#fsol"/></svg>Solution (A6)</div>
   <div class="trow"><span class="g"></span><span class="g"></span><span class="g"></span><span class="x up"></span><svg class="st"><use href="#zap"/></svg><svg class="i18"><use href="#finfo"/></svg>Solution Information</div>
  </div>
  <div class="thumb"><div></div></div>
  <div class="panehead active d-flex align-items-center">Details of "Pressure"<span class="dots"></span><svg><use href="#cdn"/></svg><svg><use href="#pin"/></svg><svg><use href="#maxi"/></svg><svg><use href="#cls"/></svg></div>
  <div class="bg-white flex-grow-1">
   <table class="props">
    <tr class="head"><th><svg class="pmbox"><use href="#pmm"/></svg></th><td colspan="2">Scope</td></tr>
    <tr><th></th><td style="width:117px">Scoping Method</td><td>Geometry Selection</td></tr>
    <tr><th></th><td>Geometry</td><td>1 Face</td></tr>
    <tr class="head"><th><svg class="pmbox"><use href="#pmm"/></svg></th><td colspan="2">Definition</td></tr>
    <tr><th></th><td>Type</td><td style="background:#e6e5e1">Pressure</td></tr>
    <tr><th></th><td>Define By</td><td>Normal To</td></tr>
    <tr><th></th><td>Applied By</td><td>Surface Effect</td></tr>
    <tr><th></th><td>Loaded Area</td><td>Deformed</td></tr>
    <tr><th></th><td><label><input type="checkbox" class="tick">Magnitude</label></td><td>7.e+007 Pa &nbsp;(ramped)</td></tr>
    <tr><th></th><td>Suppressed</td><td>No</td></tr>
   </table>
  </div>
 </aside>

 <div class="d-flex flex-column flex-grow-1" style="min-width:0">
  <div class="gtools d-flex align-items-center">
   <span class="grip" style="margin-right:7px"></span>
   <button class="btn plain tb" aria-label="Previous view"><svg class="i18"><use href="#zback"/></svg></button>
   <button class="btn plain tb" aria-label="Next view"><svg class="i18"><use href="#zfwd"/></svg></button><span class="bar"></span>
   <button class="btn plain tb on" aria-label="Shaded with edges"><svg class="i18"><use href="#cubeiso"/></svg></button>
   <button class="btn plain tb" aria-label="Shaded"><svg class="i18"><use href="#cubeflat"/></svg></button>
   <button class="btn plain tb" aria-label="Show parts"><svg class="i18"><use href="#cubes"/></svg></button><span class="bar"></span>
   <button class="btn plain tb" aria-label="Viewports"><svg class="i18"><use href="#boxes"/></svg></button><span class="bar"></span>
   <button class="btn plain tb" aria-label="Rotate"><svg class="i18"><use href="#rot"/></svg></button><span class="caret" style="margin:0 2px 0 4px"></span>
   <div class="tbset" style="width:165px">
   <button class="btn plain tb" aria-label="Pan"><svg class="i18"><use href="#pan"/></svg></button>
   <button class="btn plain tb" aria-label="Zoom"><svg class="i18"><use href="#zud"/></svg></button>
   <button class="btn plain tb" aria-label="Box zoom"><svg class="i18"><use href="#zplus"/></svg></button>
   <button class="btn plain tb" aria-label="Zoom to fit"><svg class="i18"><use href="#zblue"/></svg></button>
   <button class="btn plain tb" aria-label="Zoom to selection"><svg class="i18"><use href="#zgreen"/></svg></button>
   <button class="btn plain tb" aria-label="Magnifier"><svg class="i18"><use href="#zud"/></svg></button></div><span class="bar"></span>
   <span class="ms-1" style="width:48px">Select</span>
   <button class="btn plain d-flex align-items-center" style="width:80px;gap:4px"><svg class="i18"><use href="#modei"/></svg>Mode<span class="caret"></span></button>
   <div class="tbset" style="width:303px">
   <button class="btn plain tb on" aria-label="Smart select"><svg width="20" height="18"><use href="#smart"/></svg></button>
   <button class="btn plain tb" aria-label="Vertex"><svg class="i18"><use href="#sv"/></svg></button>
   <button class="btn plain tb" aria-label="Edge"><svg class="i18"><use href="#se"/></svg></button>
   <button class="btn plain tb" aria-label="Face"><svg class="i18"><use href="#sf"/></svg></button>
   <button class="btn plain tb" aria-label="Body"><svg class="i18"><use href="#sb"/></svg></button>
   <button class="btn plain tb" aria-label="Node"><svg class="i18"><use href="#sm"/></svg></button>
   <button class="btn plain tb" aria-label="Element face"><svg class="i18"><use href="#sm"/></svg></button>
   <button class="btn plain tb" aria-label="Element"><svg class="i18"><use href="#smm"/></svg></button>
   <button class="btn plain tb" aria-label="Hit point"><svg class="i18"><use href="#xyz"/></svg></button>
   <button class="btn plain tb" aria-label="Label"><svg class="i18"><use href="#lbl"/></svg></button>
   <button class="btn plain tb" aria-label="Annotation label"><svg class="i18"><use href="#abct"/></svg></button></div><span class="bar"></span>
   <button class="btn plain tb" aria-label="Path"><svg class="i18"><use href="#trend"/></svg></button><span class="bar"></span>
   <button class="btn plain d-flex align-items-center ms-1" style="width:112px;gap:4px"><svg class="i18"><use href="#clip"/></svg>Clipboard<span class="caret"></span></button>
   <span style="width:64px" class="text-nowrap">[ Empty ]</span><span class="bar"></span>
   <button class="btn plain d-flex align-items-center ms-1" style="width:91px;gap:4px"><svg class="i18"><use href="#ext"/></svg>Extend<span class="caret"></span></button>
   <button class="btn plain d-flex align-items-center" style="width:105px;gap:4px"><svg class="i18"><use href="#pinpt"/></svg>Select By<span class="caret"></span></button>
   <button class="btn plain d-flex align-items-center" style="width:95px;gap:4px"><svg class="i18"><use href="#conv"/></svg>Convert<span class="caret"></span></button>
   <span class="caret ink mt-3"></span>
  </div>
  <div class="scene">
   <svg class="model" viewBox="292 204 1626 582" font-size="13">
    <path d="M924 313 1272 304 1233 306" fill="#d8d8d8" stroke="#d8d8d8"/>
    <path fill-rule="evenodd" d="M924 314 1233 306 1249 678 941 686zM1048 427l5 125 63-2-6-125z" fill="#434343" stroke="#d5d5d5" stroke-width="1.300"/>
    <path d="m1048 427 39-1 5 124-39 2z" fill="#b5b5b5" stroke="#d8d8d8" stroke-width="1.500"/>
    <path d="m1053 552 63-2" stroke="#e6e6e6" stroke-width="2.500"/>
    <path d="m1233 306 39-2 16 372-39 2z" fill="#d02a2a" stroke="#e8cfd0" stroke-width="1.300"/>
    <path d="M1232 497h22q4 12 0 24h-22z" fill="#ff3535" stroke="#111" stroke-width="1.500"/>
    <path d="M1267 510h25" stroke="#5a0d0d" stroke-width="6" stroke-linecap="round"/><circle cx="1292" cy="510" r="3" fill="#c31717"/><path d="m1264 506-6 4 6 4" fill="none" stroke="#8a1212" stroke-width="1.500"/>
    <path d="M1249 509h14M1257 502v14" stroke="#7b80e0"/>
    <path d="M857 734h498v11H857z" fill="#f6f8fe" stroke="#222"/><path d="M856 734h125v11H856zM1105 734h125v11h-125z"/>
    <g text-anchor="middle"><text x="856" y="729">0.000</text><text x="1105" y="729">1.000</text><text x="1354" y="729">2.000</text><text x="1386" y="729">(m)</text><text x="980" y="760">0.500</text><text x="1230" y="760">1.500</text></g>
    <g stroke-width="4"><path d="m1803 682-3-66" stroke="#0a7f0a" stroke-width="5"/><path d="m1800 597 9 20q-8 2-16 0z" fill="#0a9a0a"/><path d="m1803 682-48 3" stroke="#0808c0" stroke-width="5"/><path d="m1737 686 16-9q8 7 0 17z" fill="#0404a8"/><path d="M1804 682h36" stroke="#750000" stroke-width="5"/><path d="m1857 681-13-8q-11 2-6 14 3 4 7 2z" fill="#a80808"/></g>
    <circle cx="1796" cy="643" r="9" fill="#0ab0b4"/><circle cx="1795" cy="641" r="5" fill="#16d0d2"/>
    <text x="1799" y="583" fill="#14b014" font-size="14">Y</text><text x="1865" y="681" fill="#ff2020" font-size="14">X</text><text x="1725" y="688" fill="#1616e8" font-size="14">Z</text>
    <g fill="#fff" font-weight="700" text-anchor="end"><text x="1912" y="249" font-size="45" font-family="Inter" aria-label="Ansys">Λnsys</text><text x="1910" y="279" font-size="22" font-family="Lato" font-weight="900">2024 R1</text><text x="1892" y="314" font-size="24" font-family="Lato" font-weight="900">STUDENT</text></g>
    <path d="M1772 288h137" stroke="#e6ecfb" stroke-width="2"/>
   </svg>
   <div class="note"><b>A: Static Structural</b><br>Pressure<br>Time: 1. s<br>26-04-2024 14:43
    <div class="d-flex align-items-center mt-3" style="gap:6px"><span class="swatch"></span>Pressure: 7.e+007 Pa</div></div>
  </div>
  <div class="d-flex" style="gap:5px;padding-top:5px;height:209px">
   <section class="d-flex flex-column" style="flex:812 1 0;min-width:0">
    <div class="panehead d-flex align-items-center">Graph<span class="dots"></span><svg class="text-dark"><use href="#cdn"/></svg><svg class="text-dark"><use href="#pin"/></svg><svg class="text-dark"><use href="#maxi"/></svg><svg class="text-dark"><use href="#cls"/></svg></div>
    <svg class="bg-white w-100 border-bottom" style="height:158px" viewBox="292 815 812 157" font-size="14">
     <path d="M360 847.500h713M360 890.500h713" stroke="#a9a9a9" stroke-width="1.500"/><path d="M369 847v43" stroke="#ddd"/>
     <path d="M369 890 1074 847" stroke="#d01818" stroke-width="1.300" stroke-dasharray="4 3"/>
     <path d="M366.500 887.500h5v5h-5z" fill="#fff" stroke="#d01818"/>
     <path d="M1074.500 841v49" stroke="#000" stroke-width="4" stroke-linecap="round"/><path d="M1074.500 891v8" stroke="#999"/><path d="M1072 845h4v4h-4z" fill="#e01010"/>
     <text x="354" y="854" text-anchor="end">7.e+7</text><text x="354" y="898" text-anchor="end">0.</text><text x="1073" y="834" text-anchor="end" font-weight="700">1.</text><text x="1073" y="916" text-anchor="end">1.</text>
     <path d="M369.500 938.500h705v17h-705z" fill="#0078d7" stroke="#8a8a8a"/><text x="721" y="952" text-anchor="middle" fill="#fff" font-size="12">1</text>
    </svg>
    <div class="d-flex"><a class="lowtab" href="#">Messages</a><a class="lowtab on" href="#">Graph</a></div>
   </section>
   <section class="d-flex flex-column" style="flex:809 1 0;min-width:0">
    <div class="panehead d-flex align-items-center" style="padding-right:6px">Tabular Data<span class="dots"></span><svg class="text-dark"><use href="#cdn"/></svg><svg class="text-dark"><use href="#pin"/></svg><svg class="text-dark"><use href="#maxi"/></svg><svg class="text-dark"><use href="#cls"/></svg></div>
    <div class="flex-grow-1" style="background:#a0a0a0">
     <table class="grid">
      <thead><tr><th style="width:19px"></th><th style="width:46px">Steps</th><th style="width:59px">Time [s]</th><th style="width:115px"><label class="d-flex align-items-center" style="color:#d0102a"><input class="tick" type="checkbox" checked>Pressure [Pa]</label></th></tr></thead>
      <tbody><tr><th>1</th><td class="k">1</td><td>0.</td><td>= 0.</td></tr><tr><th>2</th><td class="k">1</td><td>1.</td><td>7.e+007</td></tr><tr><th>*</th><td class="k"></td><td></td><td></td></tr></tbody>
     </table>
    </div>
   </section>
  </div>
 </div>
</main>

<footer>
 <div class="statusbar d-flex align-items-center"><span>Ready</span>
  <span class="ms-auto">Messages pane</span><span style="margin-left:23px">No Selection</span>
  <svg width="12" height="8" style="margin:0 6px 0 29px"><path d="m6 0 6 6H0z" fill="#fff"/></svg><span>Metric (m, kg, N, s, V, A)</span><span style="margin-left:20px">Degrees</span><span class="ms-3">rad/s</span><span class="ms-3">Celsius</span></div>
 <div class="taskbar">
  <div class="d-flex align-items-center tray" style="padding-left:24px;gap:8px">
   <svg width="32" height="36"><circle cx="16" cy="21" r="12" fill="#f2962a"/><path d="M4 16a4 4 0 0 1 0-8 5 5 0 0 1 9-1 4 4 0 0 1 3 9z" fill="#c9d8f4"/><path d="M16 31a4 4 0 0 1 0-8 5 5 0 0 1 9-1 4 4 0 0 1 4 9z" fill="#c9d8f4"/><circle cx="22" cy="10" r="10" fill="#ff99a4"/><text x="23" y="15" text-anchor="middle" font-size="13" fill="#222">1</text></svg>
   <div><div>38°C</div><div style="color:#ccc">Partly sunny</div></div>
  </div>
  <div class="d-flex align-items-center" style="padding-left:14px">
   <svg width="30" height="30" style="margin-right:16px"><path d="M0 1h14v14H0z" fill="#6fd8fb"/><path d="M15 1h14v14H15z" fill="#55c8f9"/><path d="M0 16h14v14H0z" fill="#42bdf8"/><path d="M15 16h14v14H15z" fill="#1ea0f4"/></svg>
   <div class="pill d-flex align-items-center"><svg width="20" height="20"><circle cx="8" cy="8" r="6.500" fill="none" stroke="#eee" stroke-width="2"/><path d="m13 13 5 6" stroke="#eee" stroke-width="2"/></svg><input class="ms-2" placeholder="Search" aria-label="Search">
    <svg width="54" height="36" class="ms-auto"><path d="M3 4c10 4 24 16 34 24q6 4 15 2l-4 4q-9 2-15-3C24 24 14 11 3 4z" fill="#a8806a"/><g fill="#d9c648" stroke="#b9a22e" stroke-width="1.500" stroke-dasharray="2 1"><ellipse cx="5" cy="6" rx="3.500" ry="3"/><ellipse cx="17" cy="5" rx="3" ry="4"/><ellipse cx="7" cy="17" rx="6" ry="4"/><ellipse cx="27" cy="12" rx="3.500" ry="6.500"/><ellipse cx="39" cy="17" rx="5" ry="10"/><ellipse cx="19" cy="27" rx="7" ry="5"/></g><g fill="#8e8340"><circle cx="23" cy="3" r="1.500"/><circle cx="30" cy="3" r="1.500"/><circle cx="46" cy="6" r="2"/><circle cx="48" cy="12" r="1.500"/><circle cx="50" cy="19" r="3"/><circle cx="8" cy="31" r="2.500"/><circle cx="3" cy="31" r="1"/></g></svg></div>
   <div class="app"><svg width="32" height="30"><path d="M1 10h23v19H1z" fill="#6c6b70"/><path d="M9 1h22v20H9z" fill="#f0f0f0"/><path d="M9 10h15v11H9z" fill="#aaa"/></svg></div>
   <div class="app run"><svg width="30" height="30"><path d="M0 4q0-2 2-2h9l3 3h14q2 0 2 2v8H0z" fill="#e2a112"/><path d="M0 8h14l2-2h14v20q0 2-2 2H2q-2 0-2-2z" fill="#fcc93c"/><path d="M5 28v-5q0-2 3-2h14q3 0 3 2v5z" fill="#0d77c8"/><path d="M9 25h12" stroke="#0a5a9c"/></svg></div>
   <div class="app"><svg width="28" height="28"><path d="m1 2 9-1 8 2 9-2v25l-14 1-12-2z" fill="#1f75f5"/><path d="M1 2 11 1l4 10-14 5z" fill="#f2425f"/><path d="M1 14h6v13H1z" fill="#7b4bf0"/><path d="M5 5h18v18H5z" fill="#0b0210"/><text x="8" y="14" font-size="9" font-weight="700" fill="#fff" font-family="Liberation Mono">IJ</text><path d="M8 20h7" stroke="#fff" stroke-width="1.500"/></svg></div>
   <div class="app run"><svg width="30" height="30"><path d="M0 0h30v30H0z"/><g fill="none" stroke="#f5a81c" stroke-width="1.500"><path d="m15 1 4 2v5l-4 2-4-2V3zM10 8l5 2v6l-5 3-4-3v-5zM20 8l4 3v5l-4 3-5-3v-6zM11 3l4 2 4-2M15 5v5M6 11l4 2 5-3M15 10l5 3 4-2M10 13v6M20 13v6"/></g><text x="15" y="29" text-anchor="middle" font-size="11" font-weight="700" fill="#fff">WB</text></svg></div>
   <div class="app run cur"><svg width="30" height="30"><path d="M0 0h30v30H0z"/><use href="#gearring" x="11" y="13"/><use href="#gearring" transform="translate(20 5) scale(.7)"/><text x="15" y="29" text-anchor="middle" font-size="11" font-weight="700" fill="#fff">M</text></svg></div>
  </div>
  <div class="d-flex align-items-center justify-content-end tray" style="padding-right:22px">
   <svg width="16" height="16"><path d="m2 11 6-6 6 6" fill="none" stroke="#fff" stroke-width="1.500"/></svg>
   <svg width="22" height="16" style="margin:0 22px"><path d="M5 14a4 4 0 0 1 0-8 6 6 0 0 1 11 0 4 4 0 0 1 1 8z" fill="#9a9a9c"/><path d="m2 13 9-6 9 5q0 3-4 3H5z" fill="#f4f4f4"/></svg>
   <div class="text-center">ENG<br>IN</div>
   <svg width="22" height="20" style="margin-left:22px"><g fill="none" stroke="#fff" stroke-width="1.500"><path d="M2 8a13 13 0 0 1 18 0M5 11a9 9 0 0 1 12 0M8 14a5 5 0 0 1 6 0"/></g><circle cx="11" cy="17" r="1.500" fill="#fff"/></svg>
   <svg width="22" height="20" style="margin-left:8px"><path d="M2 8h4l5-5v14l-5-5H2z" fill="none" stroke="#fff" stroke-width="1.300"/><path d="M13 7q2 3 0 6M16 5q3 5 0 10" stroke="#fff" fill="none" stroke-width="1.300"/><path d="M18 3q4 7 0 14" stroke="#777" fill="none"/></svg>
   <svg width="22" height="20" style="margin:0 20px 0 8px"><path d="M7 5h8q3 0 3 3v5q0 3-3 3H5q-3 0-3-3v-2M20 8v5" fill="none" stroke="#fff" stroke-width="1.500"/><path d="M8 7h8v7H4l1-2z" fill="#fff"/><path d="m4 1-3 6h2l-1 4 5-6H5l1-4z" fill="#fff"/></svg>
   <div class="text-end clock">14:43<br>26-04-2024</div>
   <svg width="18" height="20" style="margin:0 22px 0 10px"><path d="M2 15c2-2 1-6 2-9a5 5 0 0 1 10 0c1 3 0 7 2 9zM6 17h6q-3 4-6 0z" fill="#e8e8e8"/></svg>
   <svg width="30" height="32"><path d="M8 1h9q4 0 6 8h-5q-2-3-4-1l-4 9-8-4z" fill="#1f8be0"/><path d="m2 12 9 1-3 10H5q-5 0-4-6z" fill="#78c843"/><path d="M18 9h7q5 0 3 6l-3 8h-9z" fill="#c552d8"/><rect x="7" y="21" width="22" height="10" rx="2" fill="#ffc80a"/><text x="18" y="29" text-anchor="middle" font-size="8" font-weight="700">PRE</text></svg>
  </div>
 </div>
</footer>
<script src="https://cdn.jsdelivr.net/npm/bootstrap@5.3.0/dist/js/bootstrap.bundle.min.js"></script>
</body>
</html>
